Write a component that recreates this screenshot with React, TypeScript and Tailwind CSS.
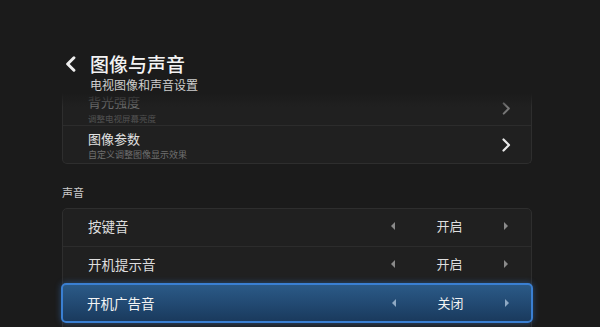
import React from "react";

function Chevron({ className, w = 2.2 }: { className?: string; w?: number }) {
  return (
    <svg viewBox="0 0 9 14" className={className} fill="none">
      <path d="M1.5 1.5 L7 7 L1.5 12.5" stroke="currentColor" strokeWidth={w} strokeLinecap="round" strokeLinejoin="round" />
    </svg>
  );
}

function Tri({ dir, className }: { dir: "l" | "r"; className?: string }) {
  return (
    <svg viewBox="0 0 4 8" className={className}>
      {dir === "l" ? <path d="M4 0 L0 4 L4 8 Z" fill="currentColor" /> : <path d="M0 0 L4 4 L0 8 Z" fill="currentColor" />}
    </svg>
  );
}

function OptionRow({ label, value, active, border }: { label: string; value: string; active?: boolean; border?: boolean }) {
  if (active) {
    return (
      <div className="-mx-[2px] h-[40px] flex items-center rounded-[5px] border-2 border-[#3a7fd2] bg-gradient-to-b from-[#2b5a87] via-[#224a73] to-[#1a3a5d] shadow-[0_0_6px_rgba(60,130,220,0.45)]">
        <span className="flex-1 pl-[24px] pb-[1px] text-[13.5px] leading-[16px] text-[#f4f4f4]">{label}</span>
        <div className="w-[117px] mr-[22px] flex items-center justify-between">
          <Tri dir="l" className="w-[4px] h-[8px] text-[#8fa9c4]" />
          <span className="pb-[1px] text-[13px] leading-[16px] text-[#f4f4f4]">{value}</span>
          <Tri dir="r" className="w-[4px] h-[8px] text-[#8fa9c4]" />
        </div>
      </div>
    );
  }
  return (
    <div className={`h-[37px] flex items-center ${border ? "border-t border-[#2c2c2c]" : ""}`}>
      <span className="flex-1 pl-[25px] pb-[3px] text-[13.5px] leading-[16px] text-[#dedede]">{label}</span>
      <div className="w-[117px] mr-[23px] pb-[3px] flex items-center justify-between">
        <Tri dir="l" className="w-[4px] h-[8px] text-[#8a8a8a]" />
        <span className="text-[13px] leading-[16px] text-[#dedede]">{value}</span>
        <Tri dir="r" className="w-[4px] h-[8px] text-[#8a8a8a]" />
      </div>
    </div>
  );
}

export default function App() {
  return (
    <div className="w-[600px] h-[327px] overflow-hidden bg-[#1b1b1b] font-['Noto_Sans_CJK_SC','Noto_Sans',sans-serif]">
      <div className="pt-[53px] pl-[65px] flex items-center h-[75px]">
        <Chevron w={2.6} className="w-[11px] h-[16px] text-[#eeeeee] rotate-180" />
        <span className="ml-[14px] text-[19px] leading-[22px] font-medium text-[#f3f3f3]">图像与声音</span>
      </div>
      <div className="pl-[90px] mt-[3px] text-[12px] leading-[14px] text-[#cfcfcf]">电视图像和声音设置</div>

      <div className="relative mt-[1px] ml-[62px] w-[470px] rounded-b-[5px] border-x border-b border-[#2e2e2e] bg-[#202020]">
        <div className="h-[32px] flex items-start relative">
          <div className="flex-1 pl-[25px] pt-[1px] opacity-40">
            <div className="text-[13px] leading-[16px] text-[#dedede]">背光强度</div>
            <div className="mt-[3px] text-[8.5px] leading-[10px] text-[#9a9a9a]">调整电视屏幕亮度</div>
          </div>
          <Chevron className="mt-[9px] mr-[20px] w-[9px] h-[13px] text-[#777777]" />
          <div className="absolute -left-px -right-px top-0 h-[14px] bg-gradient-to-b from-[#1b1b1b] to-transparent" />
        </div>
        <div className="h-[38px] border-t border-[#2c2c2c] flex items-start">
          <div className="flex-1 pl-[25px] pt-[5px]">
            <div className="text-[13px] leading-[16px] text-[#e2e2e2]">图像参数</div>
            <div className="mt-[3px] text-[9px] leading-[10px] text-[#6f6f6f]">自定义调整图像显示效果</div>
          </div>
          <Chevron className="mt-[12px] mr-[20px] w-[9px] h-[14px] text-[#e8e8e8]" />
        </div>
      </div>

      <div className="ml-[62px] mt-[21px] text-[11px] leading-[14px] text-[#cccccc]">声音</div>

      <div className="mt-[9px] ml-[62px] w-[470px] rounded-[5px] border border-[#2e2e2e] bg-[#202020] pb-[40px]">
        <OptionRow label="按键音" value="开启" />
        <OptionRow label="开机提示音" value="开启" border />
        <OptionRow label="开机广告音" value="关闭" active />
      </div>
    </div>
  );
}
